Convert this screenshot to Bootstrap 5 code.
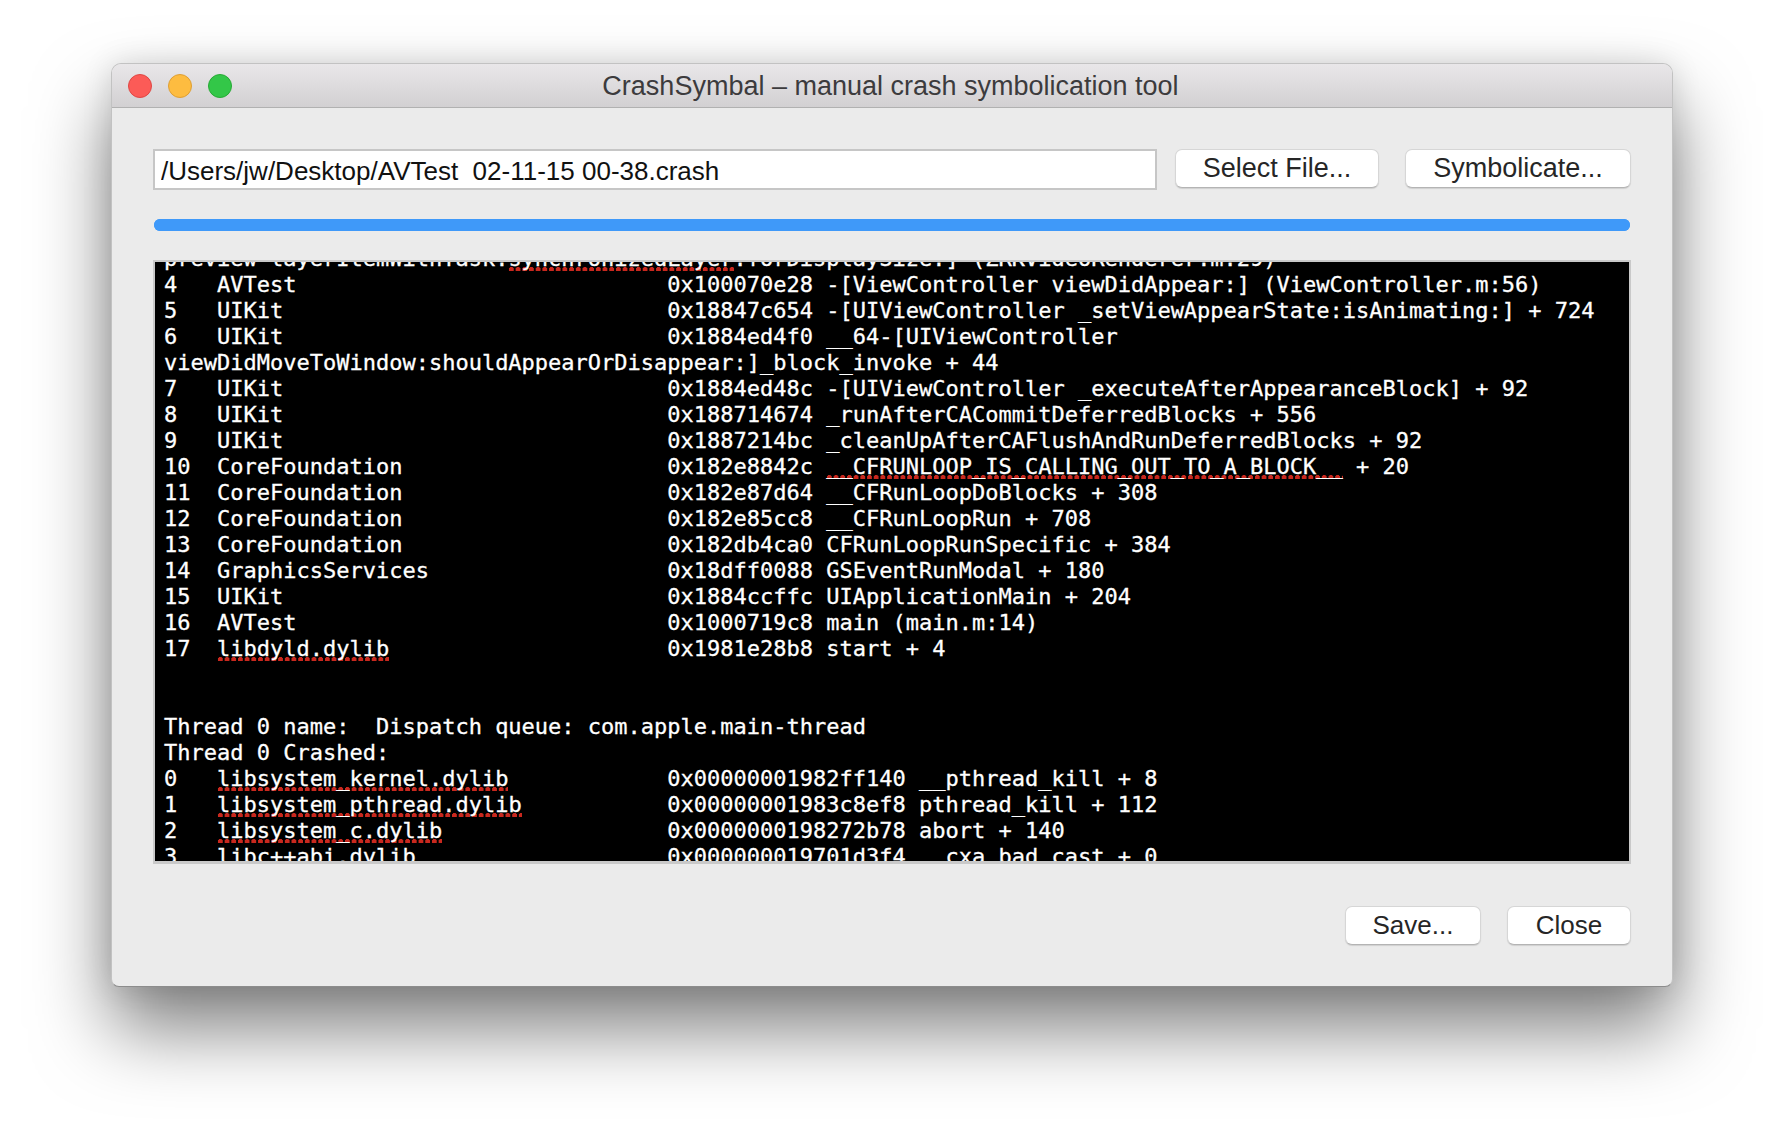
<!DOCTYPE html>
<html lang="en">
<head>
<meta charset="utf-8">
<title>CrashSymbal</title>
<link href="https://cdn.jsdelivr.net/npm/bootstrap@5.3.0/dist/css/bootstrap.min.css" rel="stylesheet">
<style>
html,body{height:1146px;overflow:hidden;background:#fff;}
body{padding:63px 0 0 111px;font-family:"Liberation Sans",Arial,sans-serif;}
.mac-window{width:1562px;height:924px;background:#ebebeb;border-radius:10px 10px 8px 8px;border:1px solid #c2c2c2;border-bottom-color:#8c8c8c;box-shadow:0 42px 76px rgba(0,0,0,.5),0 0 30px rgba(0,0,0,.12);overflow:hidden;}
.mac-title{height:44px;background:linear-gradient(#e9e7e9,#d2d0d2);border-bottom:1px solid #b1b1b1;color:#3c3b3d;font-size:27px;line-height:45px;padding-right:3px;}
.mac-lights{left:16px;top:10px;}
.mac-light{width:24px;height:24px;border-radius:50%;border:1px solid;}
.l-red{background:#fc5b57;border-color:#df4744;}
.l-yellow{background:#fdbc40;border-color:#de9f34;}
.l-green{background:#33c748;border-color:#27aa35;}
.mac-body{padding:41px 41px 0 41px;}
.path-input.form-control{height:41px;border:2px solid #c6c6c6;border-radius:0;padding:4px 6px 0;font-size:26px;line-height:34px;color:#111;background:#fff;font-family:"Liberation Sans",Arial,sans-serif;box-shadow:none;white-space:pre;}
.mac-btn.btn{height:39px;background:#fff;border:1px solid #d6d6d6;border-bottom-color:#b4b4b4;border-radius:7px;box-shadow:0 1px 1px rgba(0,0,0,.12);font-size:26px;line-height:37px;padding:0;color:#262626;font-family:"Liberation Sans",Arial,sans-serif;}
.mac-btn.btn.btn-wide{font-size:27px;}
.w-select{width:204px;margin-left:18px;}
.w-symb{width:226px;margin-left:26px;}
.w-save{width:136px;}
.w-close{width:124px;margin-left:26px;}
.mac-progress.progress{height:12px;margin:29px 1px 0;border-radius:6px;background:#3f99f9;}
.mac-progress .progress-bar{background:#3f99f9;}
.term-box{height:604px;margin-top:29px;background:#000;border:2px solid #c9c9c9;border-bottom-width:3px;overflow:hidden;}
.term-text{margin:-16px 0 0 9px;padding:0;color:#fff;font-family:"DejaVu Sans Mono","Liberation Mono",monospace;font-size:22px;line-height:26px;white-space:pre;overflow:visible;-webkit-text-stroke:.3px #fff;}
.spell{background-image:radial-gradient(circle at 3.35px 2.5px,#c9281e 2.3px,transparent 2.8px);background-size:6.7px 5px;background-repeat:repeat-x;background-position:0 21px;}
.mac-foot{margin-top:42px;}
</style>
</head>
<body>
<div class="mac-window d-flex flex-column">
  <div class="mac-title position-relative text-center flex-shrink-0">
    <div class="mac-lights position-absolute d-flex gap-3">
      <span class="mac-light l-red"></span>
      <span class="mac-light l-yellow"></span>
      <span class="mac-light l-green"></span>
    </div>
    CrashSymbal – manual crash symbolication tool
  </div>
  <div class="mac-body flex-grow-1">
    <div class="d-flex align-items-start">
      <input class="form-control path-input flex-grow-1 w-auto" readonly value="/Users/jw/Desktop/AVTest  02-11-15 00-38.crash">
      <button class="btn mac-btn btn-wide w-select flex-shrink-0" type="button">Select File...</button>
      <button class="btn mac-btn btn-wide w-symb flex-shrink-0" type="button">Symbolicate...</button>
    </div>
    <div class="progress mac-progress"><div class="progress-bar w-100"></div></div>
    <div class="term-box"><pre class="term-text">preview layerItemWithTask:<span class="spell">synchronizedLayer</span>:forDisplaySize:] (ZRKVideoRenderer.m:29)
4   AVTest                            0x100070e28 -[ViewController viewDidAppear:] (ViewController.m:56)
5   UIKit                             0x18847c654 -[UIViewController _setViewAppearState:isAnimating:] + 724
6   UIKit                             0x1884ed4f0 __64-[UIViewController
viewDidMoveToWindow:shouldAppearOrDisappear:]_block_invoke + 44
7   UIKit                             0x1884ed48c -[UIViewController _executeAfterAppearanceBlock] + 92
8   UIKit                             0x188714674 _runAfterCACommitDeferredBlocks + 556
9   UIKit                             0x1887214bc _cleanUpAfterCAFlushAndRunDeferredBlocks + 92
10  CoreFoundation                    0x182e8842c <span class="spell">__CFRUNLOOP_IS_CALLING_OUT_TO_A_BLOCK__</span> + 20
11  CoreFoundation                    0x182e87d64 __CFRunLoopDoBlocks + 308
12  CoreFoundation                    0x182e85cc8 __CFRunLoopRun + 708
13  CoreFoundation                    0x182db4ca0 CFRunLoopRunSpecific + 384
14  GraphicsServices                  0x18dff0088 GSEventRunModal + 180
15  UIKit                             0x1884ccffc UIApplicationMain + 204
16  AVTest                            0x1000719c8 main (main.m:14)
17  <span class="spell">libdyld.dylib</span>                     0x1981e28b8 start + 4


Thread 0 name:  Dispatch queue: com.apple.main-thread
Thread 0 Crashed:
0   <span class="spell">libsystem_kernel.dylib</span>            0x00000001982ff140 __pthread_kill + 8
1   <span class="spell">libsystem_pthread.dylib</span>           0x00000001983c8ef8 pthread_kill + 112
2   <span class="spell">libsystem_c.dylib</span>                 0x0000000198272b78 abort + 140
3   libc++abi.dylib                   0x000000019701d3f4 __cxa_bad_cast + 0</pre></div>
    <div class="mac-foot d-flex justify-content-end">
      <button class="btn mac-btn w-save" type="button">Save...</button>
      <button class="btn mac-btn w-close" type="button">Close</button>
    </div>
  </div>
</div>
</body>
</html>
